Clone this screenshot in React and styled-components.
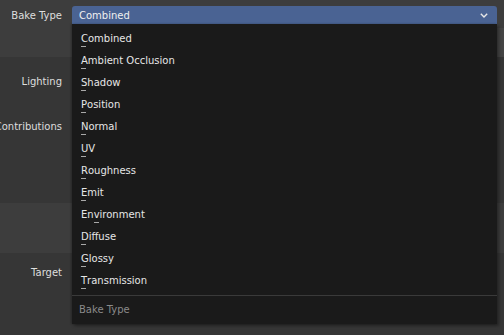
import React from "react";
import styled, { createGlobalStyle } from "styled-components";

const Global = createGlobalStyle`
  html, body { margin: 0; padding: 0; background: #363636; }
  body { font-family: "DejaVu Sans", "Liberation Sans", sans-serif; }
`;

const Screen = styled.div`
  position: relative;
  width: 504px;
  height: 335px;
  overflow: hidden;
  display: flex;
  flex-direction: column;
  font-family: "DejaVu Sans", "Liberation Sans", sans-serif;
  font-size: 10px;
  color: #e2e2e2;
`;

const Section = styled.div`
  height: ${(p) => p.$h}px;
  background: ${(p) => (p.$light ? "#3d3d3d" : "#363636")};
  padding-top: ${(p) => p.$pad || 0}px;
  box-sizing: border-box;
  display: flex;
  flex-direction: column;
  gap: ${(p) => p.$gap || 0}px;
  flex-shrink: 0;
`;

const Row = styled.div`
  display: flex;
  align-items: center;
  height: 19px;
  gap: 10px;
`;

const Label = styled.div`
  width: 62px;
  flex-shrink: 0;
  text-align: right;
  white-space: nowrap;
  direction: rtl;
  overflow: visible;
  line-height: 19px;
  color: #dedede;
`;

const Field = styled.div`
  width: 425px;
  height: 18px;
  box-sizing: border-box;
  background: #4a6393;
  border-radius: 3px 3px 0 0;
  display: flex;
  align-items: center;
  justify-content: space-between;
  padding: 0 9px 0 7px;
  color: #f0f0f0;
  margin-top: -1px;
`;

const Chevron = styled.svg`
  width: 8px;
  height: 5px;
  display: block;
`;

const Menu = styled.div`
  position: absolute;
  left: 72px;
  top: 24px;
  width: 425px;
  height: 300px;
  background: #1a1a1a;
  box-shadow: 2px 2px 3px rgba(0, 0, 0, 0.35), -1px 0 2px rgba(0, 0, 0, 0.25);
  display: flex;
  flex-direction: column;
  padding-top: 4px;
  box-sizing: border-box;
`;

const Item = styled.div`
  height: 22px;
  line-height: 22px;
  padding-left: 9px;
  color: #e6e6e6;
  white-space: nowrap;
`;

const Key = styled.span`
  position: relative;
  &::after {
    content: "";
    position: absolute;
    left: 0;
    width: 5px;
    bottom: -3px;
    height: 1px;
    background: #a8a8a8;
  }
`;

const Separator = styled.div`
  height: 1px;
  background: #3a3a3a;
  margin-top: 3px;
`;

const Footer = styled.div`
  height: 27px;
  line-height: 27px;
  padding-left: 7px;
  color: #8a8a8a;
`;

const SideStrip = styled.div`
  position: absolute;
  right: 0;
  top: 28px;
  width: 7px;
  height: 29px;
  background: #454545;
`;

const items = [
  ["", "C", "ombined"],
  ["", "A", "mbient Occlusion"],
  ["", "S", "hadow"],
  ["", "P", "osition"],
  ["", "N", "ormal"],
  ["", "U", "V"],
  ["", "R", "oughness"],
  ["", "E", "mit"],
  ["En", "v", "ironment"],
  ["", "D", "iffuse"],
  ["", "G", "lossy"],
  ["", "T", "ransmission"],
];

export default function App() {
  return (
    <>
      <Global />
      <Screen>
        <Section $h={57} $light $pad={6}>
          <Row>
            <Label>Bake Type</Label>
            <Field>
              <span>Combined</span>
              <Chevron viewBox="0 0 8 5">
                <path d="M0.8 0.8 L4 4 L7.2 0.8" fill="none" stroke="#e8e8e8" strokeWidth="1.4" />
              </Chevron>
            </Field>
          </Row>
        </Section>
        <Section $h={146} $pad={15} $gap={26}>
          <Row>
            <Label>Lighting</Label>
          </Row>
          <Row>
            <Label>Contributions</Label>
          </Row>
        </Section>
        <Section $h={50} $light />
        <Section $h={82} $pad={10}>
          <Row>
            <Label>Target</Label>
          </Row>
        </Section>
        <SideStrip />
        <Menu>
          {items.map(([pre, k, post]) => (
            <Item key={pre + k + post}>
              {pre}
              <Key>{k}</Key>
              {post}
            </Item>
          ))}
          <Separator />
          <Footer>Bake Type</Footer>
        </Menu>
      </Screen>
    </>
  );
}
